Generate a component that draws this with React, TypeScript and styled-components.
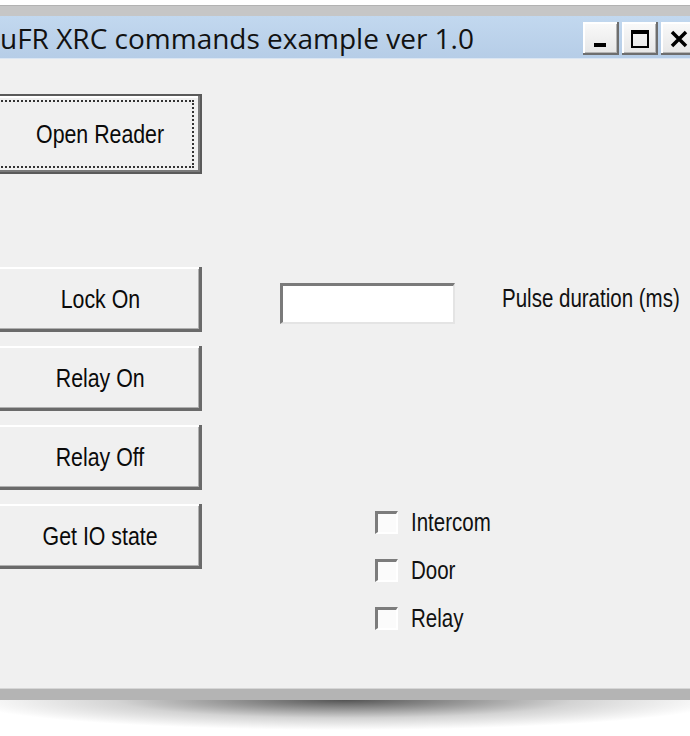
import React from 'react';
import styled, { createGlobalStyle } from 'styled-components';

const GlobalStyle = createGlobalStyle`
    html, body {
        margin: 0;
        padding: 0;
        background: #ffffff;
    }
    #root {
        width: 690px;
        height: 736px;
        overflow: hidden;
    }
`;

// the dialog font is a narrow sans; no narrow face is installed, so squeeze Liberation Sans
const Narrow = styled.span<{ $origin?: string }>`
    display: inline-block;
    font-family: "Liberation Sans", Arial, sans-serif;
    transform: scaleX(0.82);
    transform-origin: ${p => p.$origin ?? 'center'};
    white-space: nowrap;
`;

const Page = styled.div`
    width: 690px;
    height: 736px;
    padding-top: 5px;
    box-sizing: border-box;
    background: #ffffff;
`;

const Window = styled.div`
    display: flex;
    flex-direction: column;
    width: 690px;
`;

const FrameTop = styled.div`
    height: 11px;
    background: #c6c6c6;
    border-top: 1px solid #b2b2b2;
    box-sizing: border-box;
`;

const TitleBar = styled.div`
    height: 43px;
    display: flex;
    align-items: center;
    justify-content: space-between;
    background: linear-gradient(#c2d8ef, #b6cde7);
    border-bottom: 1px solid #dbe6f3;
    box-sizing: border-box;
`;

const Title = styled.div`
    font-family: "Open Sans", "Liberation Sans", sans-serif;
    font-size: 28px;
    color: #121212;
    white-space: nowrap;
    margin-top: 1px;
`;

const Caption = styled.div`
    align-self: flex-start;
    margin-top: 6px;
    margin-right: -7px;
    display: flex;
    gap: 3px;
`;

const CaptionButton = styled.div`
    width: 36px;
    height: 33px;
    box-sizing: border-box;
    background: linear-gradient(#fafafa, #e6e6e6);
    box-shadow: inset -2px -2px #6e6e6e, inset 2px 2px #ffffff, inset -3px -3px #b4b4b4;
    display: flex;
    align-items: center;
    justify-content: center;
`;

const Body = styled.div`
    height: 629px;
    background: #f0f0f0;
    padding-top: 35px;
    box-sizing: border-box;
    overflow: hidden;
    display: flex;
    flex-direction: column;
`;

const Button = styled.div<{ $default?: boolean; $h?: number }>`
    position: relative;
    margin-left: -20px;
    width: 222px;
    height: ${p => p.$h ?? 65}px;
    box-sizing: border-box;
    background: #f0f0f0;
    display: flex;
    align-items: center;
    justify-content: center;
    padding-left: 18px;
    font-size: 26px;
    color: #0a0a0a;
    box-shadow: ${p => p.$default
        ? 'inset 0 0 0 2px #5a5a5a, inset -4px -4px #7a7a7a, inset 4px 4px #ffffff'
        : 'inset -3px -3px #6a6a6a, inset 2px 2px #ffffff, inset -4px -4px #b0b0b0'};
`;

const FocusRing = styled.div`
    position: absolute;
    inset: 6px 8px 6px 6px;
    border: 2px dotted #333333;
    pointer-events: none;
`;

const Controls = styled.div`
    margin-top: 93px;
    display: flex;
`;

const ButtonColumn = styled.div`
    display: flex;
    flex-direction: column;
    gap: 14px;
`;

const RightPane = styled.div`
    padding-left: 78px;
    display: flex;
    flex-direction: column;
`;

const PulseRow = styled.div`
    margin-top: 16px;
    display: flex;
    align-items: flex-start;
`;

const TextBox = styled.div`
    flex: none;
    width: 175px;
    height: 41px;
    box-sizing: border-box;
    background: #ffffff;
    border-top: 3px solid #7a7a7a;
    border-left: 3px solid #7a7a7a;
    border-right: 2px solid #e4e4e4;
    border-bottom: 2px solid #e4e4e4;
`;

const Label = styled.div`
    font-size: 25px;
    line-height: 30px;
    color: #111111;
`;

const PulseLabel = styled(Label)`
    margin-left: 47px;
`;

const CheckList = styled.div`
    margin-top: 186px;
    margin-left: 95px;
    display: flex;
    flex-direction: column;
    gap: 24px;
`;

const CheckRow = styled.div`
    height: 24px;
    display: flex;
    align-items: center;
    gap: 13px;
`;

const CheckBox = styled.div`
    flex: none;
    width: 23px;
    height: 23px;
    box-sizing: border-box;
    background: #fbfbfb;
    border-top: 3px solid #7c7c7c;
    border-left: 3px solid #7c7c7c;
    border-right: 2px solid #ffffff;
    border-bottom: 2px solid #ffffff;
`;

const FrameBottom = styled.div`
    height: 12px;
    background: #b4b4b4;
    border-top: 1px solid #d6d6d6;
    box-sizing: border-box;
`;

const Shadow = styled.div`
    height: 30px;
    background: radial-gradient(ellipse 55% 100% at 50% 0%, rgba(40, 40, 40, 0.8), rgba(80, 80, 80, 0.25) 60%, rgba(255, 255, 255, 0) 100%);
`;

const Glyph = styled.svg`
    display: block;
`;

function App() {
    return (
        <Page>
            <GlobalStyle />
            <Window>
                <FrameTop />
                <TitleBar>
                    <Title>uFR XRC commands example ver 1.0</Title>
                    <Caption>
                        <CaptionButton>
                            <Glyph width="20" height="20" viewBox="0 0 20 20">
                                <rect x="3" y="14" width="12" height="4" fill="#000" />
                            </Glyph>
                        </CaptionButton>
                        <CaptionButton>
                            <Glyph width="22" height="22" viewBox="0 0 22 22">
                                <rect x="3" y="3" width="16" height="16" fill="none" stroke="#000" strokeWidth="2" />
                                <rect x="3" y="3" width="16" height="3" fill="#000" />
                            </Glyph>
                        </CaptionButton>
                        <CaptionButton>
                            <Glyph width="22" height="22" viewBox="0 0 22 22">
                                <path d="M4 4 L18 18 M18 4 L4 18" stroke="#000" strokeWidth="3.5" />
                            </Glyph>
                        </CaptionButton>
                    </Caption>
                </TitleBar>
                <Body>
                    <Button $default $h={80}>
                        <FocusRing />
                        <Narrow>Open Reader</Narrow>
                    </Button>
                    <Controls>
                        <ButtonColumn>
                            <Button><Narrow>Lock On</Narrow></Button>
                            <Button><Narrow>Relay On</Narrow></Button>
                            <Button><Narrow>Relay Off</Narrow></Button>
                            <Button><Narrow>Get IO state</Narrow></Button>
                        </ButtonColumn>
                        <RightPane>
                            <PulseRow>
                                <TextBox />
                                <PulseLabel><Narrow $origin="left">Pulse duration (ms)</Narrow></PulseLabel>
                            </PulseRow>
                            <CheckList>
                                {['Intercom', 'Door', 'Relay'].map(name => (
                                    <CheckRow key={name}>
                                        <CheckBox />
                                        <Label><Narrow $origin="left">{name}</Narrow></Label>
                                    </CheckRow>
                                ))}
                            </CheckList>
                        </RightPane>
                    </Controls>
                </Body>
                <FrameBottom />
                <Shadow />
            </Window>
        </Page>
    );
}

export default App;
